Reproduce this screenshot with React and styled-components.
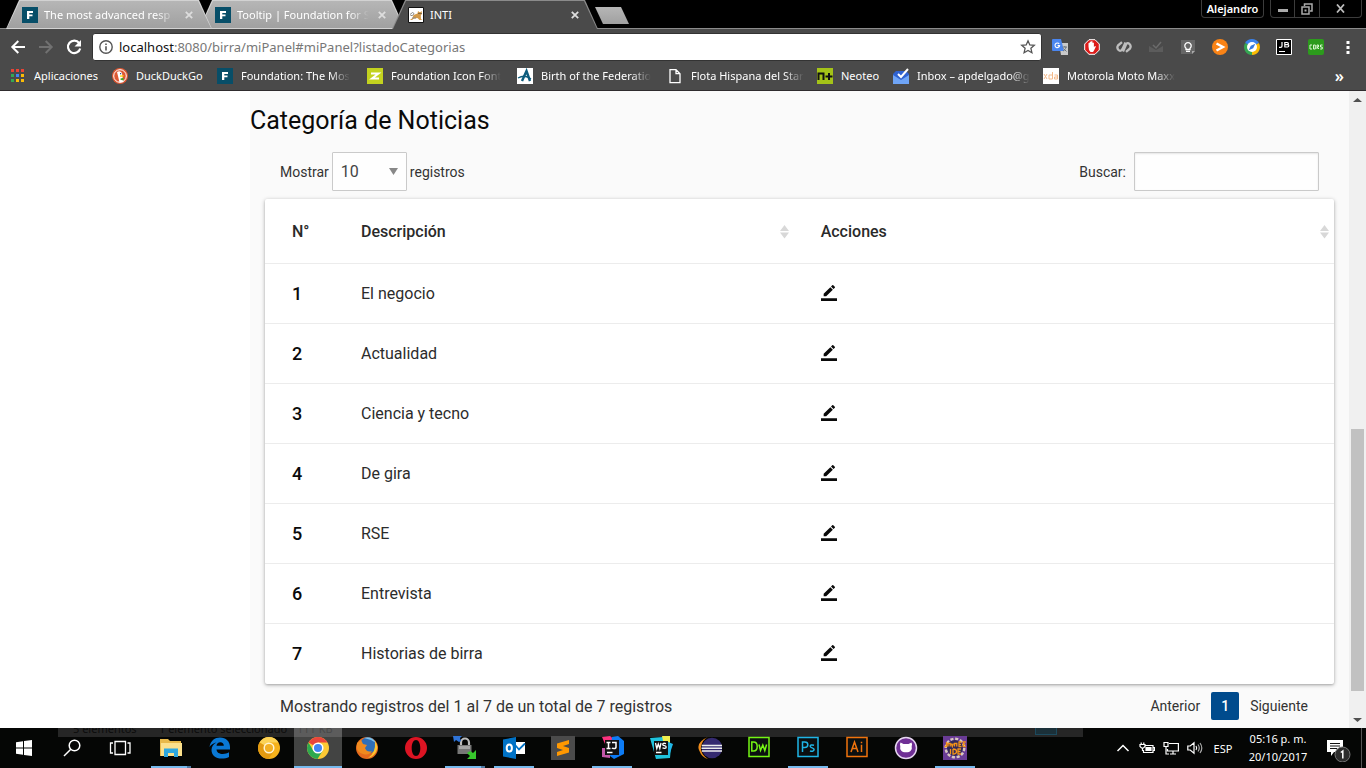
import React from "react";
import styled, { createGlobalStyle } from "styled-components";

const ui = '"Noto Sans", "Open Sans", sans-serif';
const body = 'Roboto, "Liberation Sans", sans-serif';

const GlobalStyle = createGlobalStyle`
  * { box-sizing: border-box; }
  body { margin: 0; background: #fff; font-family: ${body}; color: #0a0a0a; }
  button, input, select { font: inherit; color: inherit; margin: 0; }
  button { padding: 0; border: 0; background: none; cursor: pointer; }
  a { color: inherit; text-decoration: none; }
  svg { display: block; flex: none; }
`;

const Screen = styled.div`
  display: flex;
  flex-direction: column;
  min-height: 100vh;
`;

/* ---------- browser frame ---------- */

const Browser = styled.header`
  font-family: ${ui};
  font-size: 11px;
  line-height: 16px;
  color: #fff;
  background: #4a4a4a;
  border-bottom: 1px solid #2f2c2e;
`;

const TabStrip = styled.div`
  display: flex;
  align-items: flex-start;
  height: 29px;
  padding-left: 6px;
  background: linear-gradient(#8b8b8b, #8b8b8b) bottom / 100% 1px no-repeat #000;
`;

const tabShape = "polygon(0 100%, 13px 0, calc(100% - 13px) 0, 100% 100%)";

const Tab = styled.div`
  position: relative;
  z-index: ${(p) => p.$z};
  display: flex;
  align-items: center;
  gap: 6px;
  width: 206px;
  height: 29px;
  padding: 0 16px;
  margin-right: -13px;
  clip-path: ${tabShape};
  background: ${(p) => (p.$active ? "#8b8b8b" : "#d2d2d2")};
  &::before {
    content: "";
    position: absolute;
    z-index: -1;
    inset: 1px 1px ${(p) => (p.$active ? 0 : 1)}px;
    clip-path: ${tabShape};
    background: ${(p) => (p.$active ? "#4a4a4a" : "linear-gradient(#b6b6b6, #a0a0a0)")};
  }
`;

const Fading = styled.span`
  overflow: hidden;
  white-space: nowrap;
  mask-image: ${(p) => (p.$fade ? "linear-gradient(to left, transparent, #000 20px)" : "none")};
`;

const TabTitle = styled(Fading)`
  flex: 1;
`;

const IconButton = styled.button`
  display: grid;
  place-items: center;
  flex: none;
  width: ${(p) => p.$w || 28}px;
  height: ${(p) => p.$h || 28}px;
`;

const NewTab = styled.button`
  width: 34px;
  height: 17px;
  margin: 7px auto 0 10px;
  background: linear-gradient(#b6b6b6, #a0a0a0);
  clip-path: polygon(0 0, 26px 0, 100% 100%, 8px 100%);
`;

const Profile = styled.button`
  width: 63px;
  height: 18px;
  border: 1px solid #3c3c3c;
  border-top: 0;
  border-radius: 0 0 4px 4px;
  font-weight: 600;
`;

const WindowButtons = styled.div`
  display: flex;
  margin: 0 4px 0 6px;
  border: 1px solid #3c3c3c;
  border-top: 0;
  border-radius: 0 0 4px 4px;
  button + button { border-left: 1px solid #3c3c3c; }
`;

const Toolbar = styled.div`
  display: flex;
  align-items: center;
  padding: 4px 2px 0 4px;
`;

const Address = styled.div`
  display: flex;
  flex: 1;
  align-items: center;
  gap: 5px;
  height: 28px;
  margin: 0 2px 0 4px;
  padding: 0 5px;
  background: #fff;
  border: 1px solid #333;
  border-radius: 3px;
  color: #777;
`;

const Url = styled.a`
  flex: 1;
  font-size: 13px;
  b { font-weight: 400; color: #111; }
`;

const Bookmarks = styled.nav`
  display: flex;
  gap: 12px;
  align-items: center;
  height: 29px;
  padding: 0 22px 0 10px;
`;

const Bookmark = styled.a`
  display: flex;
  align-items: center;
  gap: 8px;
  width: ${(p) => p.$w}px;
`;

const More = styled.button`
  margin-left: auto;
  font-size: 16px;
  font-weight: 600;
`;

/* ---------- web page ---------- */

const Page = styled.div`
  display: flex;
  flex: 1;
`;

const SideSpace = styled.aside`
  flex: none;
  width: 250px;
`;

const Content = styled.main`
  flex: 1;
  min-width: 0;
  padding: 12px 0 8px;
  background: #fafafa;
`;

const Title = styled.h1`
  margin: 0 0 14px;
  font-size: 25px;
  line-height: 35px;
  font-weight: 400;
`;

const Controls = styled.div`
  display: flex;
  justify-content: space-between;
  padding: 0 30px;
  margin-bottom: 8px;
  font-size: 14px;
  color: #333;
`;

const Field = styled.label`
  display: flex;
  align-items: center;
  gap: ${(p) => p.$gap}px;
`;

const SelectBox = styled.select`
  appearance: none;
  width: 75px;
  height: 39px;
  padding: 0 8px;
  font-size: 16px;
  color: #444;
  border: 1px solid #cacaca;
  border-radius: 1px;
  background: #fefefe
    url("data:image/svg+xml,%3Csvg xmlns='http://www.w3.org/2000/svg' width='9' height='7'%3E%3Cpath d='M0 0h9L4.500 7z' fill='%23888'/%3E%3C/svg%3E")
    right 8px center no-repeat;
`;

const SearchBox = styled.input`
  width: 185px;
  height: 39px;
  padding: 8px;
  background: #fefefe;
  border: 1px solid #cacaca;
  border-radius: 1px;
  box-shadow: inset 0 1px 2px rgba(10, 10, 10, 0.1);
`;

const Card = styled.div`
  margin: 0 15px 8px;
  background: #fff;
  border-radius: 2px;
  box-shadow: 0 1px 4px rgba(0, 0, 0, 0.28), 0 1px 2px rgba(0, 0, 0, 0.14);
`;

const Table = styled.table`
  width: 100%;
  table-layout: fixed;
  border-collapse: separate;
  border-spacing: 0;
  font-size: 16px;
`;

const HeadCell = styled.th`
  width: ${(p) => p.$w || "auto"};
  height: 65px;
  padding: 0 4px 0 27px;
  text-align: left;
  font-weight: 500;
  color: #2a2a2a;
  border-bottom: 1px solid #ececec;
`;

const HeadInner = styled.div`
  display: flex;
  align-items: center;
  justify-content: space-between;
`;

const Cell = styled.td`
  height: 60px;
  padding: 0 0 0 27px;
  color: #2c2c2c;
  border-bottom: 1px solid #ececec;
  tr:last-child > & { border-bottom-color: transparent; }
`;

const Number = styled(Cell)`
  font-size: 18px;
  font-weight: 500;
  color: #0a0a0a;
`;

const ActionCell = styled(Cell)`
  padding-bottom: 1px;
`;

const Footer = styled.div`
  display: flex;
  align-items: center;
  justify-content: space-between;
  padding: 0 31px 0 30px;
  font-size: 16px;
  color: #333;
`;

const Pager = styled.nav`
  display: flex;
  font-size: 14px;
`;

const PageLink = styled.a`
  height: 28px;
  padding: 0 10px;
  line-height: 28px;
  border-radius: 2px;
  ${(p) => p.$current && "background: #004b8d; color: #fff; font-weight: 500; margin: 0 1px;"}
`;

const ScrollBar = styled.div`
  display: flex;
  flex: none;
  flex-direction: column;
  width: 17px;
  background: #f0f0f0;
`;

const Track = styled.div`
  display: grid;
  flex: 1;
  grid-template-rows: 321fr 262fr 20fr;
  padding: 0 2px;
`;

const Thumb = styled.div`
  grid-row: 2;
  background: #c1c1c1;
`;

/* ---------- taskbar ---------- */

const Taskbar = styled.footer`
  position: relative;
  display: flex;
  height: 40px;
  background: #050605;
  color: #fff;
  font-family: ${ui};
  font-size: 11px;
`;

const Behind = styled.div`
  position: absolute;
  top: 0;
  left: 58px;
  display: flex;
  width: 75%;
  height: 9px;
  padding-left: 15px;
  overflow: hidden;
  background: #262626;
  color: #0c0c0c;
  line-height: 1px;
  white-space: nowrap;
  span { width: 86px; }
  span + span { width: 138px; }
`;

const ViewSwitch = styled.i`
  width: 22px;
  height: 7px;
  margin: 0 26px 0 auto;
  background: #1b3039;
  border: 1px solid #1c4a5e;
  border-top: 0;
`;

const Starts = styled.div`
  position: relative;
  display: flex;
  margin-right: 3px;
`;

const Apps = styled.div`
  position: relative;
  display: flex;
  flex: 1;
  gap: 1px;
`;

const marker = ({ $open, $active, $stack }) => {
  if (!$open) return "none";
  const end = $stack ? "#4f7aa3" : "#76b9ed";
  return `linear-gradient(90deg, #76b9ed 36px, ${end} 36px) bottom / ${$active ? 48 : 40}px 2px no-repeat`;
};

const BarButton = styled.button`
  display: grid;
  place-items: center;
  width: 48px;
  height: 40px;
  background: ${marker}${(p) => (p.$active ? ", rgba(255, 255, 255, 0.25)" : "")};
`;

const Tray = styled.div`
  position: relative;
  display: flex;
  align-items: center;
  gap: 8px;
`;

const Language = styled.button`
  width: 24px;
`;

const Clock = styled.time`
  width: 70px;
  text-align: center;
  line-height: 18px;
  white-space: nowrap;
`;

const ShowDesktop = styled.button`
  width: 5px;
  height: 40px;
  border-left: 1px solid #555;
`;

/* ---------- drawings ---------- */

const Svg = ({ size = 16, w, h, box, children }) => (
  <svg width={w || size} height={h || size} viewBox={box || `0 0 ${w || size} ${h || size}`} fill="none" aria-hidden="true">
    {children}
  </svg>
);

const CloseIcon = () => (
  <Svg size={8}>
    <path d="M.8.8l6.400 6.400M7.200.8L.8 7.200" stroke="#ddd" strokeWidth="1.800" />
  </Svg>
);

const BackIcon = ({ color = "#fff", flip }) => (
  <Svg>
    <path transform={flip ? "matrix(-1 0 0 1 16 0)" : undefined} d="M15 8H2.500M8.300 2L2.300 8l6 6" stroke={color} strokeWidth="2" />
  </Svg>
);

const ReloadIcon = () => (
  <Svg>
    <path d="M13.200 4.200A6.200 6.200 0 1 0 14.200 9.500" stroke="#fff" strokeWidth="2.200" />
    <path fill="#fff" d="M15 1v6.500H8.500z" />
  </Svg>
);

const InfoIcon = () => (
  <Svg>
    <circle cx="8" cy="8" r="6.200" stroke="#555" strokeWidth="1.400" />
    <path fill="#555" d="M7.200 7.200h1.600v4.300H7.200zM7.200 4.500h1.600V6H7.200z" />
  </Svg>
);

const StarIcon = () => (
  <Svg>
    <path d="M8 1.800l1.800 4.100 4.500.4-3.400 3 1 4.400L8 11.400l-3.900 2.300 1-4.400-3.400-3 4.500-.4z" stroke="#555" strokeWidth="1.300" />
  </Svg>
);

const extensions = {
  "Google Translate": (
    <>
      <path fill="#c9c9c9" d="M7 4h9v12H9z" />
      <path fill="#4a86f0" d="M1 0h8l3 12H1a1 1 0 0 1-1-1V1a1 1 0 0 1 1-1z" />
      <path d="M7.200 5A2.300 2.300 0 1 0 7.600 6.600H5.600" stroke="#fff" strokeWidth="1.100" />
      <path d="M10.500 8H15M12.800 7v1M14 8c-.3 2-1.500 3.300-3 4M11.500 9.500l3 3" stroke="#6c7780" />
    </>
  ),
  AdBlock: (
    <>
      <path fill="#dd1c1a" stroke="#fff" d="M5 .7h6L15.300 5v6L11 15.300H5L.7 11V5z" />
      <path fill="#fff" d="M4.500 7.500V4.200q.7-.8 1.200 0V3q.8-.9 1.400 0V2.500q.9-.8 1.400 0V4q.7-.9 1.400 0v4l1.200-1q1 0 .6 1L10 11.500l-1 1.500H6.500L5 11z" />
    </>
  ),
  Readability: (
    <g stroke="#bdbdbd" strokeWidth="2.300" strokeLinejoin="round">
      <path d="M6 3.200L2 6.500Q.5 9 2.500 11T6.500 10L9.500 3.500" />
      <path d="M10 12.800l4-3.300q1.500-2.500-.5-4.500T10 5.500L7 12.500" />
    </g>
  ),
  Inbox: (
    <>
      <path fill="#5c5c5c" d="M1 7l7 4 7-4v6H1z" />
      <path d="M5 6l3 3 5-6" stroke="#6b6b6b" strokeWidth="1.500" />
    </>
  ),
  Keep: (
    <>
      <path fill="#666" d="M1 1h14v11l-3 3H1z" />
      <path fill="#aaa" d="M12 15v-3h3z" />
      <path d="M6 10.500V9.300a3.200 3.200 0 1 1 4 0v1.200zM6 12.300h4" stroke="#fff" strokeWidth="1.300" />
    </>
  ),
  Plex: (
    <>
      <circle cx="8" cy="8" r="8" fill="#f98316" />
      <path d="M4.500 4.500L11 8l-6.500 3.500" stroke="#fff" strokeWidth="2.400" />
    </>
  ),
  Compass: (
    <>
      <path fill="#3b82ea" d="M8 8L1.100 4A8 8 0 0 1 14.900 4z" />
      <path fill="#35a853" d="M8 8L1.100 4A8 8 0 0 0 8 16z" />
      <path fill="#fbbc05" d="M8 8v8A8 8 0 0 0 14.900 4z" />
      <circle cx="8" cy="8" r="5" fill="#fff" />
      <path fill="#357ae0" d="M11.300 4.700L9.200 9.200 4.700 11.300 6.800 6.800z" />
    </>
  ),
  JetBrains: (
    <>
      <path fill="#000" stroke="#fff" d="M.5.5h15v15H.5z" />
      <path d="M6 3v4q0 1.300-1.300 1.300H3M8.800 3v5.200M8.500 3.500h2.700q1.200 0 1.200 1t-1.200 1.100H8.500h3q1.300 0 1.300 1.200T11.500 8H8.500M3 12.500h6" stroke="#fff" strokeWidth="1.200" />
    </>
  ),
  CORS: (
    <>
      <rect width="16" height="16" rx="2" fill="#2c9b1c" />
      <g stroke="#d9f5d0">
        <path d="M4 6H2v4h2M5.500 6h1.800v4H5.500zM9 10V6h1.500v2H9l2 2M14.500 6h-2v2h1.700v2h-2" />
      </g>
    </>
  ),
};

const marks = {
  foundation: (
    <>
      <path fill="#074e68" d="M0 0h16v16H0z" />
      <path fill="#fff" d="M5 4h6v2H7.300v1.400H10.500v1.800H7.300V12H5z" />
    </>
  ),
  cat: (
    <>
      <path fill="#fff" stroke="#111" d="M.5.5h15v15H.5z" />
      <path fill="#d39a4a" d="M5.500 8l4-1.500.5-2.500 1.200 1h1.300l1.300-1v3l-1 1.500.2 3.500 1.500 1h-3l-2-2-3.500.5-2 1.500H2l2.500-2z" />
      <path stroke="#888" d="M2 7.500l2.500-2 1.500 1-1.500 2H2.500M4 11h4" />
      <path fill="#333" d="M10.500 6h1v1h-1zM12.500 6h1v1h-1z" />
    </>
  ),
  apps: (
    <>
      {[2, 7, 12].map((y, r) =>
        [1, 6, 11].map((x, c) => (
          <path key={x} fill={[["#ea4335", "#ea4335", "#ea4335"], ["#34a853", "#4285f4", "#fbbc05"], ["#34a853", "#fbbc05", "#fbbc05"]][r][c]} d={`M${x} ${y - 1}h3v3h-3z`} />
        ))
      )}
    </>
  ),
  duck: (
    <>
      <circle cx="8" cy="8" r="8" fill="#de5833" />
      <circle cx="8" cy="8" r="6.300" stroke="#fff" />
      <path fill="#fff" d="M5 4q3-2 5 1l.5 4 1 5-4 .5L6 8z" />
      <path fill="#fdd20a" d="M8 7.500l4-.3-1 1.500H8z" />
      <path fill="#3ca82b" d="M8.500 10.500l3-.8v2.800l-3-.8z" />
      <path fill="#2d4f8e" d="M8 5h1.200v1.200H8z" />
    </>
  ),
  zurb: (
    <>
      <path fill="#c3d21f" d="M0 0h16v16H0z" />
      <path d="M4 5.500h7.500L5 10.500h7" stroke="#fff" strokeWidth="2" />
    </>
  ),
  birth: (
    <>
      <path fill="#fff" d="M0 0h16v16H0z" />
      <path d="M5 13L9.500 3l3.500 10" stroke="#0d5c7d" strokeWidth="2.400" />
      <path d="M1 10q7-4 13 1" stroke="#0d5c7d" strokeWidth="1.300" />
    </>
  ),
  file: <path d="M3 1.700h6l4 4v9H3zM9 1.700v4h4" stroke="#fff" strokeWidth="1.300" />,
  neoteo: (
    <>
      <path fill="#a4c318" d="M0 0h16v16H0z" />
      <path d="M1.500 12V5.500H6.500V12M8.500 8.500h7M12 5v7" stroke="#111" strokeWidth="2" />
    </>
  ),
  inbox: (
    <>
      <path fill="#2f62d0" d="M0 6l3-3h10l3 3v9H0z" />
      <path fill="#6fa5f7" d="M0 7l8 5 8-5v9H0z" />
      <path d="M5 6l3 3 7-8" stroke="#fff" strokeWidth="2" />
    </>
  ),
  xda: (
    <>
      <path fill="#fff" d="M0 0h16v16H0z" />
      <g stroke="#f4ba8b">
        <path d="M1 6l3 5M4 6l-3 5M9.500 4v7H6V7h3.500M11.500 7h3v4h-3V9h3" />
      </g>
    </>
  ),
};

const SortIcon = () => (
  <Svg w={11} h={15}>
    <path fill="#d8d8d8" d="M1 7l4.500-6L10 7zM1 8.500h9L5.500 14.500z" />
  </Svg>
);

const EditIcon = () => (
  <Svg box="0 0 24 24">
    <path fill="#0a0a0a" d="M17.750 7L14 3.250l-10 10V17h3.750l10-10zm2.960-2.960c.39-.39.39-1.020 0-1.410L18.370.29c-.39-.39-1.020-.39-1.410 0L15 2.250 18.750 6l1.960-1.960zM0 20h24v4H0z" />
  </Svg>
);

const ScrollArrow = ({ down }) => (
  <Svg size={17}>
    <path fill="#505050" d={down ? "M4 7h9l-4.500 4z" : "M4 11h9L8.500 7z"} />
  </Svg>
);

const starts = [
  ["Inicio", <path key="i" fill="#fff" d="M4 6.200l7-1v6.300H4zM12 5l8-1v7.500h-8zM4 12.500h7v6.300l-7-1zM12 12.500h8V20l-8-1z" />],
  ["Buscar", <g key="b" stroke="#fff" strokeWidth="1.500"><circle cx="14.500" cy="9.500" r="5.300" /><path d="M10.800 13.300L4 20" /></g>],
  ["Vista de tareas", <path key="v" stroke="#fff" strokeWidth="1.300" d="M7 5.500h10.500v13H7zM5 7H2.500v10H5M19.500 7H22v10h-2.500" />],
];

const square = (stroke, glyph) => (
  <>
    <path fill="#0b0f10" stroke={stroke} strokeWidth="1.500" d="M2 1.500h20v19H2z" />
    <g stroke={stroke} strokeWidth="1.500">{glyph}</g>
  </>
);

const apps = [
  { name: "Explorador de archivos", open: true, stack: true, art: (
    <>
      <path fill="#e8b94a" d="M1 3h8l2 2h11v15H1z" />
      <path fill="#fbe08c" d="M2 7h21v13H2z" />
      <path fill="#2fa8e0" d="M5 12.500h14V21h-4v-4H9v4H5z" />
    </>
  ) },
  { name: "Edge", art: <path fill="#0a78d4" d="M1.500 11C2.500 4.500 7 1.500 12 1.500c6 0 10 4 10 9.500v2.500H8.500c.2 3 3 4.500 6.300 4.500 2.400 0 4.500-.7 6.200-1.700v4.600c-2 1.200-4.500 1.700-7.300 1.700C7.500 22.600 3.500 19 3.500 14c0-3.500 2-6 5-7.500C6 6.800 3 8.500 1.500 11zm7-1.300h7.300c0-2.200-1.300-3.400-3.500-3.400s-3.500 1.200-3.800 3.400z" /> },
  { name: "Chrome Canary", art: (
    <>
      <circle cx="12" cy="12" r="11" fill="#f6b21b" />
      <path fill="#fcd256" d="M12 12L2.500 6.500A11 11 0 0 1 21.500 6.500H12z" />
      <path fill="#e39a10" d="M12 12l5 3-5.500 8A11 11 0 0 1 2.500 6.500z" />
      <circle cx="12" cy="12" r="4.800" fill="#f3b023" stroke="#fff3d0" strokeWidth="1.500" />
    </>
  ) },
  { name: "Chrome", open: true, active: true, art: (
    <>
      <circle cx="12" cy="12" r="11" fill="#fcc934" />
      <path fill="#e8453c" d="M12 12L2.500 6.500A11 11 0 0 1 21.500 6.500H12z" />
      <path fill="#2da94f" d="M12 12l4.500 3L11.500 23A11 11 0 0 1 2.500 6.500L7.500 15z" />
      <circle cx="12" cy="12" r="4.800" fill="#4285f4" stroke="#fff" strokeWidth="1.500" />
    </>
  ) },
  { name: "Firefox", art: (
    <>
      <circle cx="12" cy="12" r="11" fill="#e66a1c" />
      <circle cx="13" cy="9.500" r="8.300" fill="#2f6fb8" />
      <path fill="#7fc4ea" d="M9 2q8-2 12 5l-5-3z" />
      <path fill="#f08a1e" d="M2 7l4-3 2 4 4 1-2 3q2 5 7 3-3 5-9 3T2 12z" />
      <path fill="#fbc531" d="M20 5q4 6 1 11t-8 6q8-5 7-17z" />
    </>
  ) },
  { name: "Opera", art: (
    <path fill="#dc1423" fillRule="evenodd" d="M12 1a11 11 0 1 0 0 22 11 11 0 0 0 0-22zm0 3c2.600 0 4.300 3.500 4.300 8s-1.700 8-4.300 8-4.300-3.500-4.300-8S9.400 4 12 4z" />
  ) },
  { name: "WinSCP", open: true, stack: true, art: (
    <>
      <path d="M8 10V6.500a4 4 0 0 1 8 0V10" stroke="#bbb" strokeWidth="2.200" />
      <path fill="#777" d="M4.500 9h14v9h-14z" />
      <path fill="#a5a5a5" d="M6 10h11v3H6z" />
      <path fill="#2f74d8" d="M0 0h9L7 2l1 3-2 1-3-2-2 2z" />
      <path fill="#37c72c" d="M23 14v9h-9l3-3-3-3 3-2 3 2z" />
    </>
  ) },
  { name: "Outlook", open: true, art: (
    <>
      <path fill="#fff" d="M11 6h12v12H11z" />
      <path d="M13.500 9.500l3.500 4 6-6" stroke="#0072c6" strokeWidth="1.800" />
      <path fill="#0072c6" d="M1 3.500L14 1v22L1 20.500z" />
      <ellipse cx="7.300" cy="12" rx="2.600" ry="3.600" stroke="#fff" strokeWidth="2" />
    </>
  ) },
  { name: "Sublime Text", art: (
    <>
      <path fill="#4b4b4b" d="M0 0h24v24H0z" />
      <path fill="#ff9800" d="M6 7.500l12-3.500v4l-6 2 6 2v4.500L6 20v-4l6-2-6-2z" />
    </>
  ) },
  { name: "IntelliJ IDEA", open: true, art: (
    <>
      <path fill="#fc317e" d="M2 1l8-1 6 5-8 10z" />
      <path fill="#c257a8" d="M2 12h8v10l-8-1z" />
      <path fill="#0d7bf5" d="M12 1l6-1 6 5v13l-10 5-4-3z" />
      <path fill="#111" d="M5 4h14v15H5z" />
      <path d="M6.500 6.500h4M8.500 6.500v6M6.500 12.500h4M12 6.500h4v4.500q0 1.600-2 1.600-1.500 0-2-.8M7 16.500h5.500" stroke="#fff" strokeWidth="1.500" />
    </>
  ) },
  { name: "WebStorm", art: (
    <>
      <path fill="#1fc3dd" d="M1 2l13-1 8 10-1 11-14 1z" />
      <path fill="#f0ef4e" d="M13 0h8v7l-7-2z" />
      <path fill="#22b8e8" d="M17 5l7 3-4 12z" />
      <path fill="#111" d="M5 5h14v14H5z" />
      <path d="M6.500 7l1.300 5.500L9.300 8l1.500 4.500L12 7M17 7.600q-3.300-1-3.300.8c0 1.700 3.500.8 3.500 2.500 0 1.900-2.500 1.700-3.700.9M7 16.500h5.500" stroke="#fff" strokeWidth="1.300" />
    </>
  ) },
  { name: "Eclipse", art: (
    <>
      <path fill="#f08c1b" d="M10 1Q-2 6 1 14t9 9Q2 18 3 11t7-10z" />
      <circle cx="14" cy="12" r="10.300" fill="#352a70" />
      <path d="M3.800 9.500h20.400M3.500 12.200h21M3.800 15h20.400" stroke="#eee" strokeWidth="1.500" />
    </>
  ) },
  { name: "Dreamweaver", art: square("#74f514", <path d="M4.800 6v9h1.700q3.700 0 3.700-4.500T6.500 6zM12 8.500l1.500 6L15.800 9l2 5.500 1.800-6" />) },
  { name: "Photoshop", open: true, art: square("#1fb5e6", <path d="M6.500 16V6h2.300q3 0 3 2.700t-3 2.800H6.500M18 9.300q-3.800-1-3.800 1c0 2 3.900 1.200 3.900 3.300 0 2-2.700 1.900-4.100 1.200" />) },
  { name: "Illustrator", art: square("#f0730d", <path d="M6 16L9.500 6 13 16M7.300 12.500h4.500M16.500 8.700V16M16.500 5.700v1.500" />) },
  { name: "GitHub Desktop", art: (
    <>
      <circle cx="12" cy="12" r="10.500" fill="#6f2f95" stroke="#e6d6f0" strokeWidth="1.500" />
      <path fill="#fff" d="M6.500 6.500l3 1.500h5l3-1.500q1 2 .2 3.800.8 3-1.200 4.700-1.500 1.300-3 1.300h-3q-1.500 0-3-1.300-2-1.700-1.200-4.700-.8-1.800.2-3.800z" />
    </>
  ) },
  { name: "Java EE IDE", open: true, art: (
    <>
      <path fill="#6a3c96" d="M0 0h24v24H0z" />
      <circle cx="12" cy="12" r="9" stroke="#d8c8c0" strokeWidth="3" strokeDasharray="3 1.700" />
      <circle cx="12" cy="12" r="8" fill="#31285c" />
      <g stroke="#f59418" strokeWidth="1.300">
        <path d="M3.500 6v4.500H1.500M5 10.500V7.500h2.200v3M8.300 7.500l1 3 1-3M11.500 10.500V7.500h2.300v3M18.500 6H16v4.500h2.500M16 8.300h2M22.800 6h-2.500v4.500h2.500M20.300 8.300h2M7.500 13v5M10 13v5q3.500 0 3.500-2.500T10 13M18 13h-3v5h3M15 15.500h2.500" />
      </g>
    </>
  ) },
];

const trayIcons = [
  ["Mostrar iconos ocultos", <path key="c" stroke="#fff" strokeWidth="1.500" d="M2.500 11L8 5.500l5.500 5.500" />],
  ["Batería", <g key="b" stroke="#fff" strokeWidth="1.200"><path d="M6 5.500h8v7H4.500V10M14 7.500h1.500v3H14M1 4.500h5v2L4.500 8h-2L1 6.500zM2.200 2.500v2M4.800 2.500v2M3.500 8v3" /><path fill="#fff" d="M7 7.500h5v3H7z" /></g>],
  ["Red", <g key="r" stroke="#fff" strokeWidth="1.200"><path d="M6 3.500h9.400v7.500H4.500V9M7 14h6M10 11v3M1 2.500h4v4H1zM3 6.500V14h3" /></g>],
  ["Volumen", <g key="v" stroke="#fff" strokeWidth="1.200"><path d="M.8 6h2.400L7 2.800v10.400L3.200 10H.8zM9 6q1.400 2 0 4" /><path stroke="#aaa" d="M11 4.500q2.500 3.500 0 7M13 3q3.600 5 0 10" /></g>],
];

/* ---------- data ---------- */

const tabs = [
  ["The most advanced resp", marks.foundation],
  ["Tooltip | Foundation for S", marks.foundation],
  ["INTI", marks.cat],
];

const bookmarks = [
  ["Aplicaciones", marks.apps, 90],
  ["DuckDuckGo", marks.duck, 93],
  ["Foundation: The Mos", marks.foundation, 138, true],
  ["Foundation Icon Font", marks.zurb, 138, true],
  ["Birth of the Federatio", marks.birth, 138, true],
  ["Flota Hispana del Star", marks.file, 138, true],
  ["Neoteo", marks.neoteo, 64],
  ["Inbox – apdelgado@g", marks.inbox, 138, true],
  ["Motorola Moto Maxx", marks.xda, 138, true],
];

const categories = ["El negocio", "Actualidad", "Ciencia y tecno", "De gira", "RSE", "Entrevista", "Historias de birra"];

export default function App() {
  return (
    <Screen>
      <GlobalStyle />
      <Browser>
        <TabStrip>
          {tabs.map(([title, art], i) => (
            <Tab key={title} $active={i === 2} $z={i === 2 ? 4 : 3 - i}>
              <Svg>{art}</Svg>
              <TabTitle $fade={i < 2}>{title}</TabTitle>
              <IconButton $w={14} $h={14} aria-label="Cerrar pestaña"><CloseIcon /></IconButton>
            </Tab>
          ))}
          <NewTab aria-label="Nueva pestaña" />
          <Profile>Alejandro</Profile>
          <WindowButtons>
            <IconButton $w={23} $h={17} aria-label="Minimizar">
              <Svg size={10}><path fill="#aaa" d="M0 5h10v3H0z" /></Svg>
            </IconButton>
            <IconButton $w={25} $h={17} aria-label="Restaurar">
              <Svg size={12}><path d="M3.500 3V1h7.500v7H9M1 4h7v7H1z" stroke="#aaa" strokeWidth="1.500" /><path fill="#aaa" d="M3.500 6.500h2v2h-2z" /></Svg>
            </IconButton>
            <IconButton $w={42} $h={17} aria-label="Cerrar">
              <Svg size={9}><path d="M1 .5l7 8M8 .5l-7 8" stroke="#bbb" strokeWidth="1.800" /></Svg>
            </IconButton>
          </WindowButtons>
        </TabStrip>
        <Toolbar>
          <IconButton aria-label="Atrás"><BackIcon /></IconButton>
          <IconButton aria-label="Adelante"><BackIcon color="#717171" flip /></IconButton>
          <IconButton aria-label="Recargar"><ReloadIcon /></IconButton>
          <Address>
            <InfoIcon />
            <Url href="#miPanel"><b>localhost</b>:8080/birra/miPanel#miPanel?listadoCategorias</Url>
            <StarIcon />
          </Address>
          {Object.entries(extensions).map(([name, art]) => (
            <IconButton key={name} $w={32} aria-label={name}><Svg>{art}</Svg></IconButton>
          ))}
          <IconButton $w={32} aria-label="Menú">
            <Svg><path fill="#fff" d="M6.500 2h3v3h-3zM6.500 7h3v3h-3zM6.500 12h3v3h-3z" /></Svg>
          </IconButton>
        </Toolbar>
        <Bookmarks>
          {bookmarks.map(([name, art, w, fade]) => (
            <Bookmark key={name} href="#marcador" $w={w}>
              <Svg>{art}</Svg>
              <Fading $fade={fade}>{name}</Fading>
            </Bookmark>
          ))}
          <More aria-label="Más marcadores">»</More>
        </Bookmarks>
      </Browser>

      <Page>
        <SideSpace />
        <Content>
          <Title>Categoría de Noticias</Title>
          <Controls>
            <Field $gap={3}>
              Mostrar
              <SelectBox defaultValue="10">
                <option>10</option>
                <option>25</option>
                <option>50</option>
              </SelectBox>
              registros
            </Field>
            <Field $gap={8}>
              Buscar:
              <SearchBox type="search" />
            </Field>
          </Controls>
          <Card>
            <Table>
              <thead>
                <tr>
                  <HeadCell $w="69px">N°</HeadCell>
                  <HeadCell $w="43%"><HeadInner>Descripción<SortIcon /></HeadInner></HeadCell>
                  <HeadCell><HeadInner>Acciones<SortIcon /></HeadInner></HeadCell>
                </tr>
              </thead>
              <tbody>
                {categories.map((name, i) => (
                  <tr key={name}>
                    <Number>{i + 1}</Number>
                    <Cell>{name}</Cell>
                    <ActionCell>
                      <IconButton $w={16} $h={16} aria-label={`Editar ${name}`}><EditIcon /></IconButton>
                    </ActionCell>
                  </tr>
                ))}
              </tbody>
            </Table>
          </Card>
          <Footer>
            <span>Mostrando registros del 1 al 7 de un total de 7 registros</span>
            <Pager>
              <PageLink href="#anterior">Anterior</PageLink>
              <PageLink href="#1" $current>1</PageLink>
              <PageLink href="#siguiente">Siguiente</PageLink>
            </Pager>
          </Footer>
        </Content>
        <ScrollBar>
          <ScrollArrow />
          <Track><Thumb /></Track>
          <ScrollArrow down />
        </ScrollBar>
      </Page>

      <Taskbar>
        <Behind aria-hidden="true">
          <span>5 elementos</span>
          <span>1 elemento seleccionado</span>
          <span>111 KB</span>
          <ViewSwitch />
        </Behind>
        <Starts>
          {starts.map(([name, art]) => (
            <BarButton key={name} aria-label={name}><Svg size={24}>{art}</Svg></BarButton>
          ))}
        </Starts>
        <Apps>
          {apps.map(({ name, open, active, stack, art }) => (
            <BarButton key={name} aria-label={name} $open={open} $active={active} $stack={stack}>
              <Svg size={24}>{art}</Svg>
            </BarButton>
          ))}
        </Apps>
        <Tray>
          {trayIcons.map(([name, art]) => (
            <IconButton key={name} $w={16} aria-label={name}><Svg>{art}</Svg></IconButton>
          ))}
          <Language>ESP</Language>
          <Clock>05:16 p. m.<br />20/10/2017</Clock>
          <IconButton $w={32} aria-label="Notificaciones">
            <Svg size={28}>
              <path fill="#fff" d="M4 6h16v12h-9l-3 4v-4H4z" />
              <path stroke="#111" d="M7 9.500h10M7 12h10M7 14.500h7" />
              <circle cx="19.500" cy="20.500" r="7.500" fill="#2d2d2d" stroke="#777" />
              <path d="M17.800 18.500l2-1.500v7.500" stroke="#fff" strokeWidth="1.500" />
            </Svg>
          </IconButton>
          <ShowDesktop aria-label="Mostrar escritorio" />
        </Tray>
      </Taskbar>
    </Screen>
  );
}
